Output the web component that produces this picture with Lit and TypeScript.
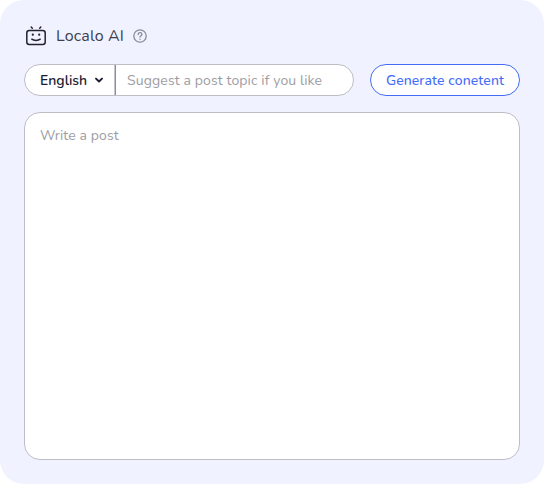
import { LitElement, html, css } from "lit";
import { customElement } from "lit/decorators.js";

@customElement("app-root")
export class AppRoot extends LitElement {
  static styles = css`
    :host {
      display: block;
      height: 100vh;
      background: #fff;
      font-family: Nunito, "Noto Sans", sans-serif;
      font-size: 14px;
      color: #1b1b33;
    }
    * {
      box-sizing: border-box;
    }
    .panel {
      height: 100%;
      padding: 24px;
      display: flex;
      flex-direction: column;
      background: #f0f2ff;
      border-radius: 24px;
    }
    .head {
      display: flex;
      align-items: center;
      height: 24px;
      margin-bottom: 16px;
    }
    .bot {
      width: 24px;
      height: 24px;
      margin-right: 8px;
    }
    .title {
      width: 77px;
      font-size: 16px;
      line-height: 24px;
      letter-spacing: 0.15px;
      color: #3e3e4c;
      white-space: nowrap;
    }
    .help {
      width: 14px;
      height: 14px;
    }
    .row {
      display: flex;
      gap: 16px;
      height: 32px;
      margin-bottom: 16px;
    }
    .prompt {
      width: 330px;
      display: flex;
      background: #fff;
      border: 1px solid #bebdc4;
      border-radius: 16px;
      overflow: hidden;
    }
    .lang {
      width: 91px;
      padding-left: 15px;
      display: flex;
      align-items: center;
      border-right: 1px solid #8f8f98;
      box-shadow: inset -1px 0 #c4c4ca;
      font-weight: 600;
    }
    .lang-name {
      width: 54px;
    }
    .chevron {
      width: 10px;
      height: 8px;
    }
    .topic {
      flex: 1;
      min-width: 0;
      padding: 0 0 0 11px;
      border: 0;
      outline: 0;
      background: none;
      font: inherit;
      letter-spacing: 0.12px;
    }
    ::placeholder {
      color: #9d9da3;
      opacity: 1;
    }
    .generate {
      flex: 1;
      padding: 0;
      background: #fff;
      border: 1px solid #446df6;
      border-radius: 16px;
      color: #446df6;
      font: inherit;
      font-weight: 500;
      letter-spacing: 0.08px;
      white-space: nowrap;
    }
    .post {
      flex: 1;
      width: 100%;
      padding: 13px 15px;
      border: 1px solid #bebdc4;
      border-radius: 16px;
      outline: 0;
      resize: none;
      background: #fff;
      font: inherit;
      line-height: 20px;
      letter-spacing: 0.12px;
    }
  `;

  render() {
    return html`
      <div class="panel">
        <div class="head">
          <svg class="bot" viewBox="0 0 24 24" fill="none" stroke="#23232f" stroke-width="1.5" stroke-linecap="round" stroke-linejoin="round">
            <rect x="2.8" y="6.5" width="18.4" height="13.9" rx="2.5" />
            <path d="M7.2 3 8.3 4.2M16.8 3 15.7 4.2M7.8 15.2c2.1 1.7 6.3 1.7 8.4 0" />
            <path d="M8.8 10.7h.01M15.2 10.7h.01" stroke-width="2.2" />
          </svg>
          <span class="title">Localo AI</span>
          <svg class="help" viewBox="0 0 14 14" fill="none" stroke="#8b8b98" stroke-width="1.3" stroke-linecap="round">
            <circle cx="7" cy="7" r="6.2" />
            <path d="M5.1 5.5C5.2 4.3 6 3.7 7 3.7c1.2 0 1.9.7 1.9 1.7C8.9 6.7 7 6.8 7 8.1M7 10.2v.05" />
          </svg>
        </div>
        <div class="row">
          <div class="prompt">
            <div class="lang">
              <span class="lang-name">English</span>
              <svg class="chevron" viewBox="0 0 10 8" fill="none" stroke="#1b1b33" stroke-width="1.9" stroke-linecap="round" stroke-linejoin="round">
                <path d="M2 2.6 5 5.5 8 2.6" />
              </svg>
            </div>
            <input class="topic" placeholder="Suggest a post topic if you like" />
          </div>
          <button class="generate">Generate conetent</button>
        </div>
        <textarea class="post" placeholder="Write a post"></textarea>
      </div>
    `;
  }
}
